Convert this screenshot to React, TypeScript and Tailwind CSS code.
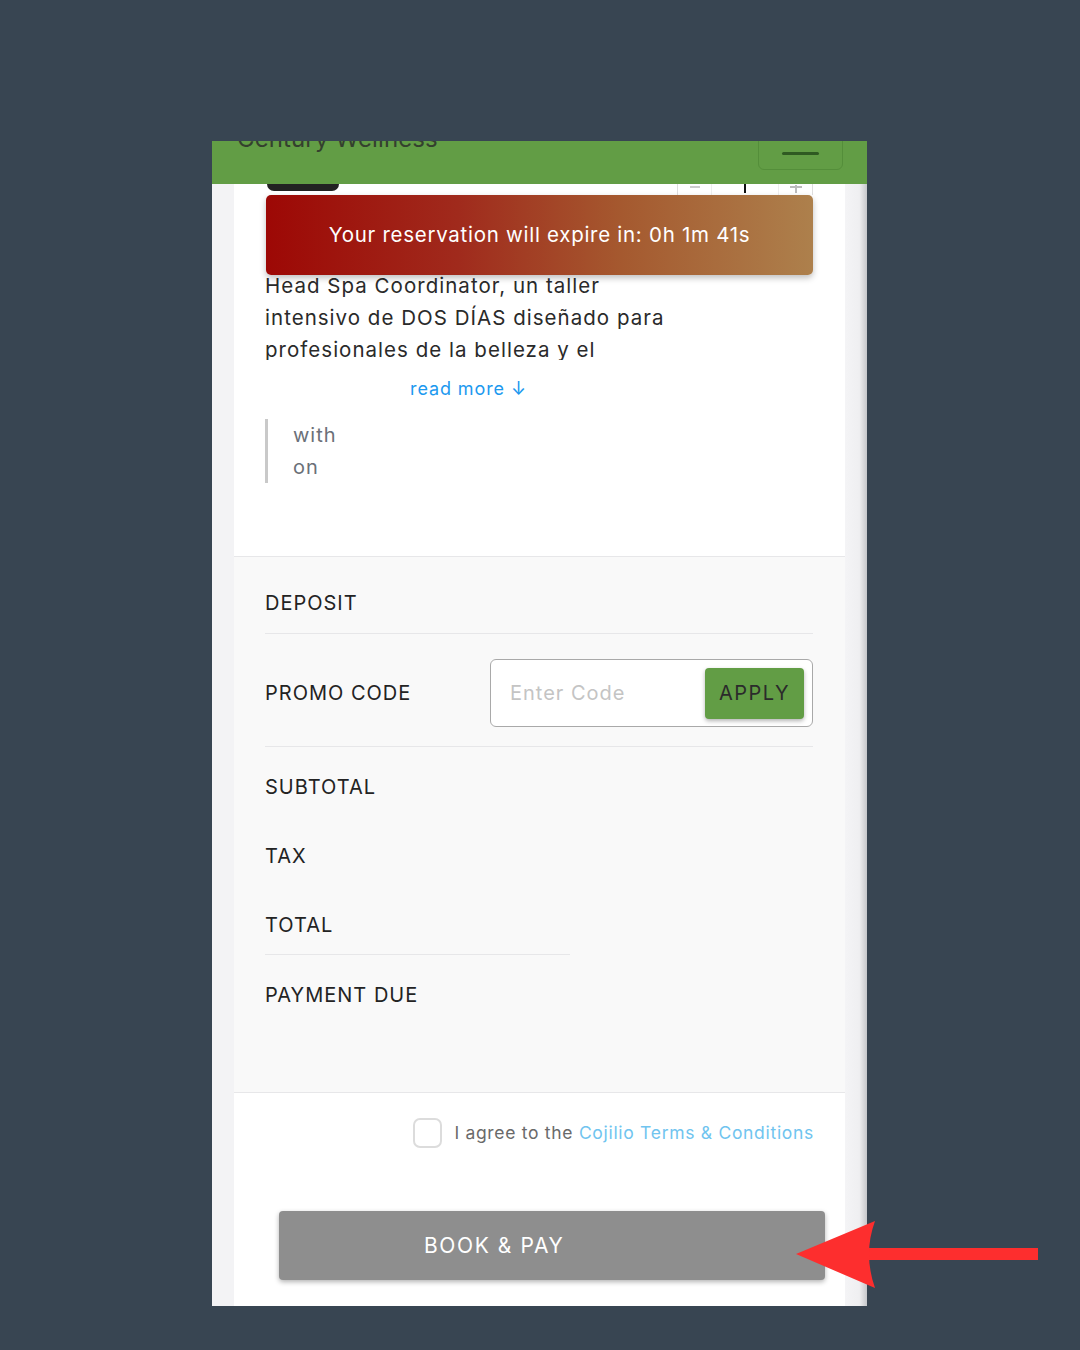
import React from "react";

const font = { fontFamily: "Inter, 'Noto Sans', Arial, sans-serif" };

function Divider({ className = "" }: { className?: string }) {
  return <div className={`h-px bg-[#e7e7e9] ${className}`} />;
}

function SummaryLabel({ children, className = "" }: { children: React.ReactNode; className?: string }) {
  return (
    <div className={`h-[28px] text-[20px] leading-[28px] tracking-[0.05em] text-[#232323] ${className}`}>{children}</div>
  );
}

export default function App() {
  return (
    <div className="relative min-h-[1350px] w-[1080px] bg-[#384552] pl-[212px] pt-[141px]" style={font}>
      <div className="flex h-[1165px] w-[655px] flex-col overflow-hidden">
        {/* top bar */}
        <div className="flex h-[43px] shrink-0 items-start justify-between overflow-hidden bg-[#629d45] pl-[25px] pr-[24px]">
          <div className="-mt-[22px] text-[24px] leading-[40px] tracking-[0.005em] text-[#34402e]">Century Wellness</div>
          <div className="-mt-[10px] flex h-[39px] w-[85px] justify-center rounded-b-[6px] border border-[#548e3a] pt-[20px]">
            <div className="h-[3px] w-[37px] rounded-full bg-[#2f5a22]" />
          </div>
        </div>

        <div className="flex flex-1">
          <div className="w-[22px] bg-[#f3f3f5]" />

          <div className="flex w-[611px] flex-col bg-white">
            {/* description block */}
            <div className="h-[373px] border-b border-[#e7e7e9]">
              <div className="flex h-[11px] items-start justify-between pl-[33px] pr-[32px]">
                <div className="h-[7px] w-[72px] rounded-b-[10px] bg-[#222]" />
                <div className="relative flex h-[11px] w-[136px] border-x border-[#dedede]">
                  <div className="flex w-[34px] justify-center border-r border-[#eee]">
                    <div className="mt-[2px] h-[2px] w-[10px] bg-[#ccc]" />
                  </div>
                  <div className="flex flex-1 justify-center">
                    <div className="h-[9px] w-[2px] bg-[#111]" />
                  </div>
                  <div className="flex w-[34px] justify-center border-l border-[#eee]">
                    <div className="relative mt-[1px] h-[8px] w-[12px]">
                      <div className="absolute left-0 top-[1px] h-[2px] w-[12px] bg-[#bbb]" />
                      <div className="absolute left-[5px] top-0 h-[8px] w-[2px] bg-[#bbb]" />
                    </div>
                  </div>
                </div>
              </div>

              <div className="relative z-10 ml-[32px] flex h-[80px] w-[547px] items-center justify-center rounded-[5px] bg-[linear-gradient(to_right,#9d0805,#a02a1c_35%,#a5592f_65%,#ad804c)] shadow-[0_3px_6px_rgba(0,0,0,0.25)]">
                <span className="text-[20.5px] tracking-[0.035em] text-white">Your reservation will expire in: 0h 1m 41s</span>
              </div>

              <div className="-mt-[5px] h-[90px] overflow-hidden pl-[31px] text-[20.5px] leading-[32px] tracking-[0.05em] text-[#2a2a2a]">
                <div>Head Spa Coordinator, un taller</div>
                <div>intensivo de DOS DÍAS diseñado para</div>
                <div>profesionales de la belleza y el</div>
              </div>

              <div className="mt-[15px] h-[28px] pl-[176px] text-[18px] leading-[28px] tracking-[0.05em] text-[#1c99ef]">read more ↓</div>

              <div className="ml-[31px] mt-[16px] border-l-[3px] border-[#c9c9c9] pl-[25px] text-[20px] leading-[32px] tracking-[0.05em] text-[#6b7078]">
                <div>with</div>
                <div>on</div>
              </div>
            </div>

            {/* totals */}
            <div className="flex h-[536px] flex-col border-b border-[#e7e7e9] bg-[#f9f9f9] pl-[31px] pr-[32px]">
              <SummaryLabel className="mt-[32px]">DEPOSIT</SummaryLabel>
              <Divider className="mt-[16px]" />

              <div className="flex items-center justify-between pb-[19px] pt-[25px]">
                <span className="text-[20px] tracking-[0.05em] text-[#232323]">PROMO CODE</span>
                <div className="flex h-[68px] w-[323px] items-center rounded-[6px] border border-[#a9a9a9] bg-white pl-[19px] pr-[8px]">
                  <span className="flex-1 text-[20px] tracking-[0.05em] text-[#c4c4c4]">Enter Code</span>
                  <div className="flex h-[51px] w-[99px] items-center justify-center rounded-[4px] bg-[#629d45] text-[20px] tracking-[1.5px] text-[#2b2b2b] shadow-[0_2px_4px_rgba(0,0,0,0.3)]">
                    APPLY
                  </div>
                </div>
              </div>
              <Divider />

              <SummaryLabel className="mt-[26px]">SUBTOTAL</SummaryLabel>
              <SummaryLabel className="mt-[41px]">TAX</SummaryLabel>
              <SummaryLabel className="mt-[41px]">TOTAL</SummaryLabel>
              <Divider className="mt-[15px] w-[305px]" />
              <SummaryLabel className="mt-[26px]">PAYMENT DUE</SummaryLabel>
            </div>

            {/* agreement and submit */}
            <div className="flex flex-1 flex-col">
              <div className="mt-[25px] flex items-center justify-end gap-[12px] pr-[31px]">
                <div className="h-[30px] w-[29px] rounded-[7px] border-2 border-[#dcdcdc] bg-white" />
                <span className="text-[17.5px] tracking-[0.04em] text-[#6a6a6a]">
                  I agree to the <span className="text-[#70c4ef]">Cojilio Terms &amp; Conditions</span>
                </span>
              </div>

              <div className="ml-[45px] mt-[63px] flex h-[69px] w-[546px] items-center rounded-[4px] bg-[#8e8e8e] pl-[145px] text-[21px] tracking-[1.6px] text-white shadow-[0_2px_5px_rgba(0,0,0,0.3)]">
                BOOK &amp; PAY
              </div>
            </div>
          </div>

          <div className="w-[22px] bg-[linear-gradient(to_right,#f4f4f6_0%,#efeff1_65%,#c6c7cb_100%)]" />
        </div>
      </div>

      {/* pointer arrow */}
      <svg className="absolute left-[795px] top-[1218px]" width="246" height="74" viewBox="0 0 246 74">
        <rect x="70" y="30" width="173" height="12" fill="#fd2e2e" />
        <path d="M1 36 L80 3 Q68 36 80 70 Z" fill="#fd2e2e" />
      </svg>
    </div>
  );
}
